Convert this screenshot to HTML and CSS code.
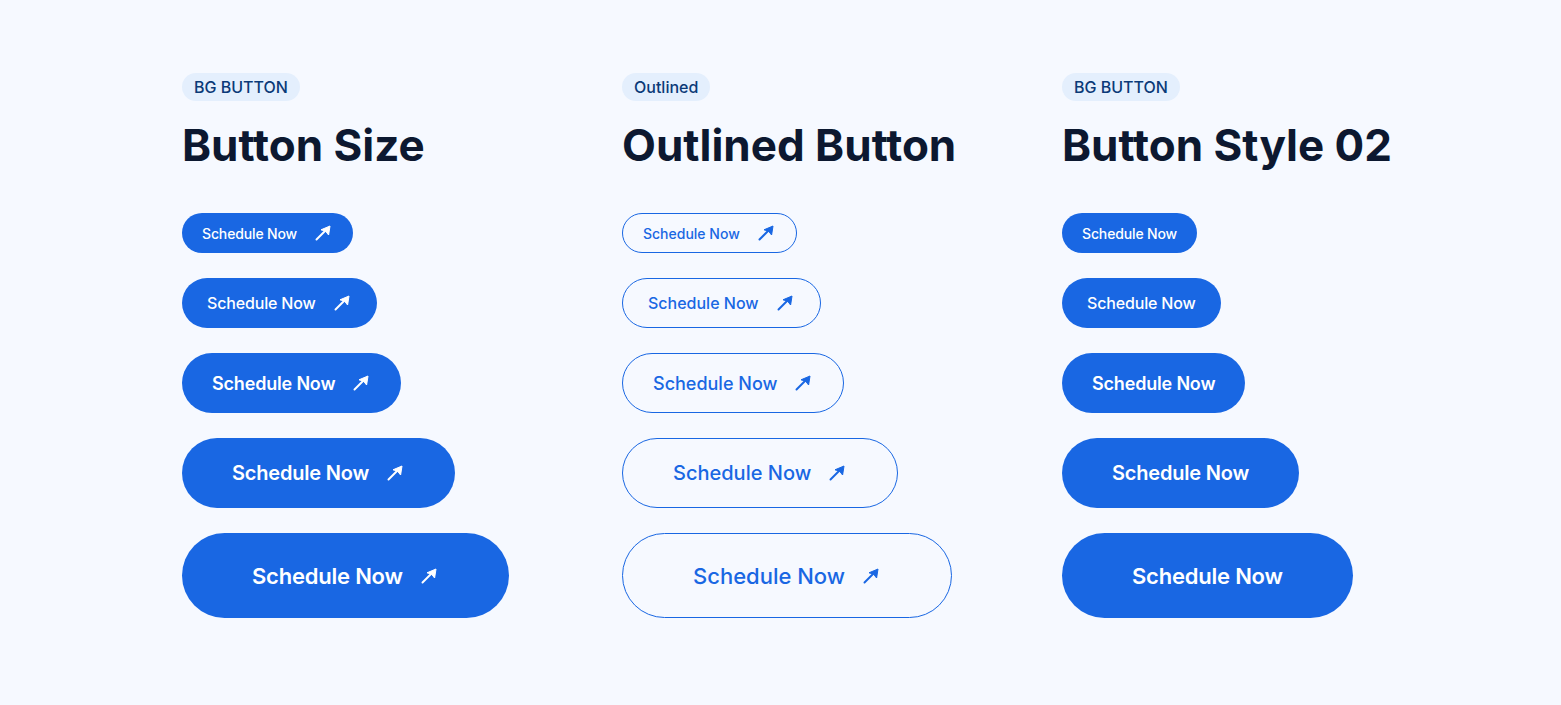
FILE: index.html
```html
<!DOCTYPE html>
<html lang="en">
<head>
<meta charset="utf-8">
<title>Buttons</title>
<link rel="stylesheet" href="styles.css">
</head>
<body>
<svg width="0" height="0" class="defs">
  <symbol id="arrow" viewBox="0 0 20 20">
    <path d="M3.5 16.5 L13.5 6.5" stroke="currentColor" stroke-width="2" stroke-linecap="round" fill="none"/>
    <path d="M17 3 L15.6 12 L12.6 8.2 L8 6.8 Z" fill="currentColor" stroke="currentColor" stroke-width="1" stroke-linejoin="round"/>
  </symbol>
</svg>
<main class="page">
  <section class="col">
    <span class="badge">BG BUTTON</span>
    <h2 class="title">Button Size</h2>
    <div class="stack">
      <a class="btn fill s1">Schedule Now <svg class="ico"><use href="#arrow"/></svg></a>
      <a class="btn fill s2">Schedule Now <svg class="ico"><use href="#arrow"/></svg></a>
      <a class="btn fill s3">Schedule Now <svg class="ico"><use href="#arrow"/></svg></a>
      <a class="btn fill s4">Schedule Now <svg class="ico"><use href="#arrow"/></svg></a>
      <a class="btn fill s5">Schedule Now <svg class="ico"><use href="#arrow"/></svg></a>
    </div>
  </section>
  <section class="col">
    <span class="badge">Outlined</span>
    <h2 class="title">Outlined Button</h2>
    <div class="stack">
      <a class="btn line s1">Schedule Now <svg class="ico"><use href="#arrow"/></svg></a>
      <a class="btn line s2">Schedule Now <svg class="ico"><use href="#arrow"/></svg></a>
      <a class="btn line s3">Schedule Now <svg class="ico"><use href="#arrow"/></svg></a>
      <a class="btn line s4">Schedule Now <svg class="ico"><use href="#arrow"/></svg></a>
      <a class="btn line s5">Schedule Now <svg class="ico"><use href="#arrow"/></svg></a>
    </div>
  </section>
  <section class="col">
    <span class="badge">BG BUTTON</span>
    <h2 class="title">Button Style 02</h2>
    <div class="stack">
      <a class="btn fill s1">Schedule Now</a>
      <a class="btn fill s2">Schedule Now</a>
      <a class="btn fill s3">Schedule Now</a>
      <a class="btn fill s4">Schedule Now</a>
      <a class="btn fill s5">Schedule Now</a>
    </div>
  </section>
</main>
</body>
</html>
```
FILE: styles.css
```css
* { box-sizing: border-box; }
html, body { margin: 0; padding: 0; }
body {
  background: #f6f9ff;
  font-family: Inter, "Noto Sans", sans-serif;
  width: 1561px;
  height: 705px;
  overflow: hidden;
}
.defs { position: absolute; }
.page {
  display: grid;
  grid-template-columns: 440px 440px 440px;
  padding: 73px 0 0 182px;
}
.col {
  display: flex;
  flex-direction: column;
  align-items: flex-start;
}
.badge {
  display: inline-flex;
  align-items: center;
  height: 28px;
  padding: 0 12px;
  border-radius: 14px;
  background: #e4effd;
  color: #0b3a78;
  font-size: 16px;
  font-weight: 500;
}
.title {
  margin: 18px 0 41px;
  font-size: 44px;
  line-height: 53px;
  font-weight: 700;
  color: #0c1830;
}
.stack {
  display: flex;
  flex-direction: column;
  align-items: flex-start;
  gap: 25px;
}
.btn {
  display: inline-flex;
  align-items: center;
  gap: 16px;
  border-radius: 999px;
  white-space: nowrap;
  letter-spacing: -0.01em;
  font-weight: 500;
}
.fill { background: #1967e3; color: #fff; }
.line { border: 1px solid #1967e3; color: #1967e3; background: transparent; letter-spacing: 0; }
.ico { width: 20px; height: 20px; flex: none; }
.s1 { height: 40px; padding: 0 20px; font-size: 14px; }
.s2 { height: 50px; padding: 0 25px; font-size: 16px; }
.s3 { height: 60px; padding: 0 30px; font-size: 18px; }
.s4 { height: 70px; padding: 0 50px; font-size: 20px; }
.s5 { height: 85px; padding: 0 70px; font-size: 22px; }
.fill.s3, .fill.s4, .fill.s5 { font-weight: 600; }
```
